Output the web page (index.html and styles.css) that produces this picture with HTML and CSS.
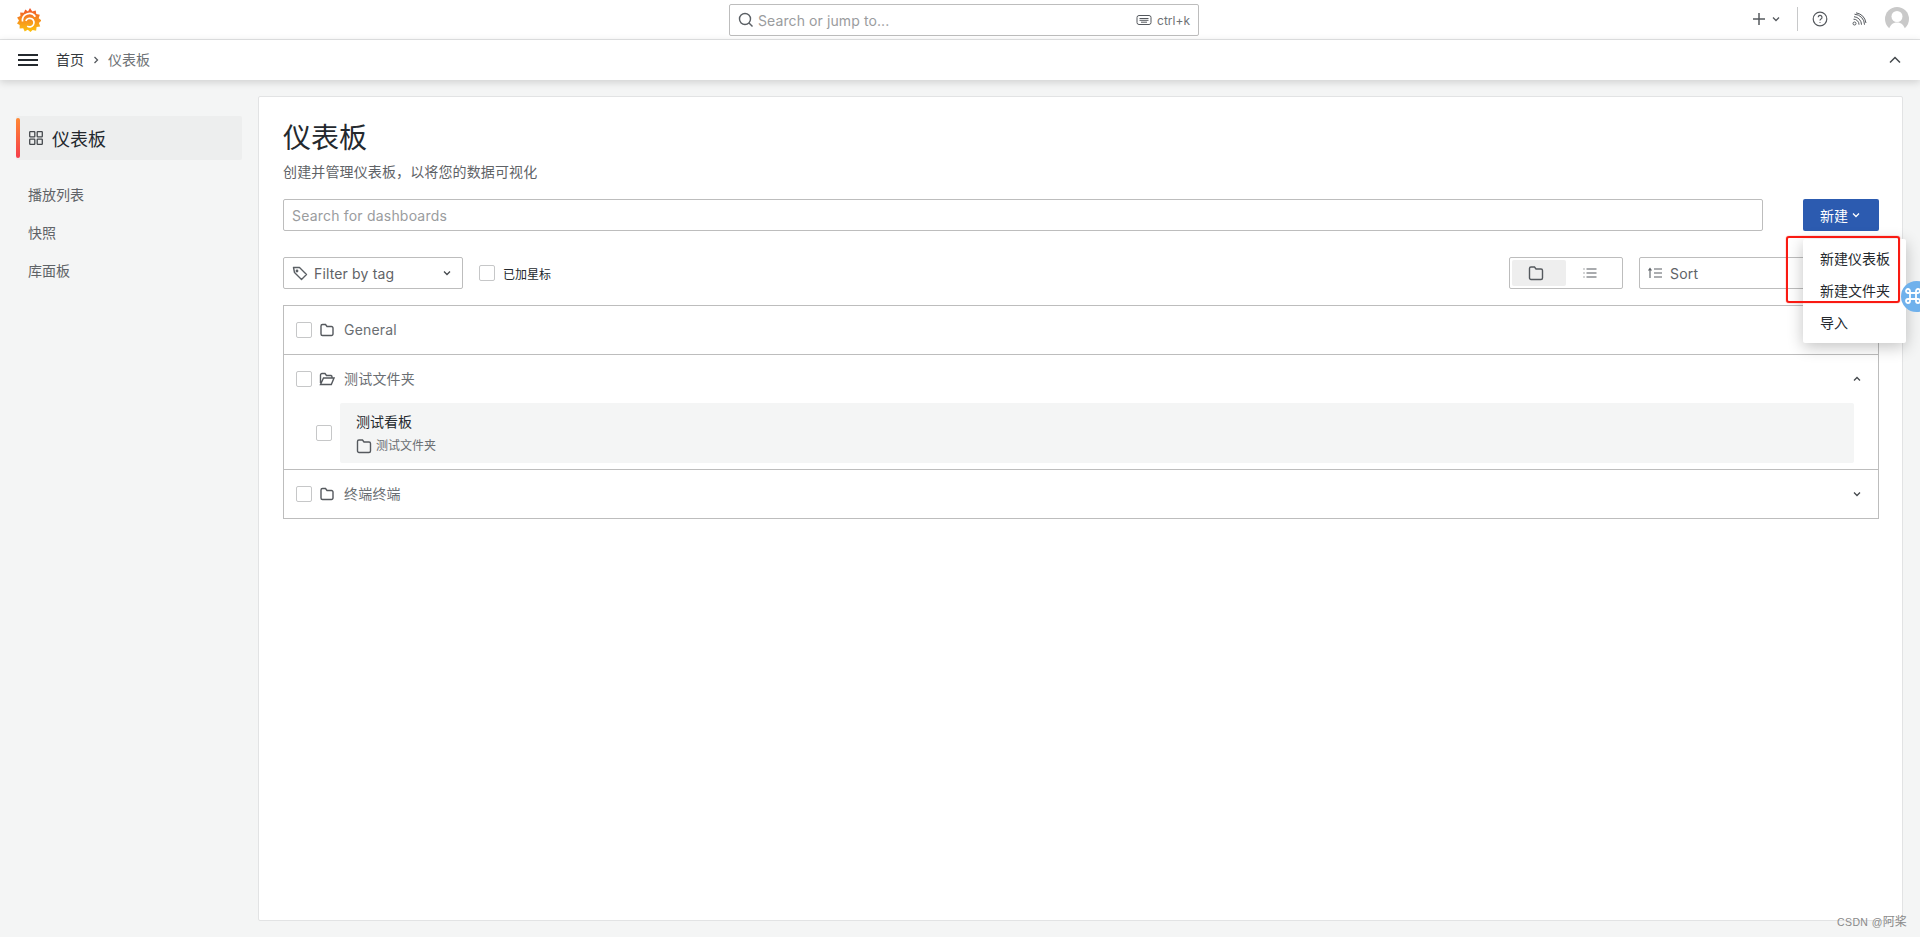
FILE: index.html
```html
<!DOCTYPE html>
<html lang="zh">
<head>
<meta charset="utf-8">
<title>仪表板</title>
<link rel="stylesheet" href="styles.css">
</head>
<body>
<header class="topbar">
  <svg class="logo" viewBox="0 0 24 24"><defs><linearGradient id="lg" x1="0" y1="1" x2="0" y2="0"><stop offset="0" stop-color="#fcc30f"/><stop offset=".55" stop-color="#f68a1f"/><stop offset="1" stop-color="#f0502a"/></linearGradient></defs><path class="logo-shape" fill="url(#lg)" d="M13 0l2.300 3.400 3.400-1 .6 3.600 3.500.8-1.100 3.400 2.800 2.300-2.600 2.500 1.300 3.400-3.600.7-.5 3.600-3.500-.8L13.500 24l-2.800-2.300-3 1.900-1.500-3.300-3.600.2.100-3.600L0 15.500l2-3L.1 9.400l3.300-1.300L3.200 4.500l3.600.2L8.300 1.400 11 3.600z"/><path class="logo-swirl" d="M5.500 13.500a7 7 0 0 1 12.800-4.800"/><path class="logo-swirl" d="M8.800 12.800a4.300 4.300 0 1 1 1.400 5.300"/></svg>
  <div class="global-search">
    <svg class="ic16 grey" viewBox="0 0 16 16"><circle cx="7" cy="7" r="5.500"/><path d="M11 11l3.500 3.500"/></svg>
    <span class="gs-text">Search or jump to...</span>
    <svg class="kbd" viewBox="0 0 16 12"><rect x="1" y="1.500" width="14" height="9" rx="2"/><path d="M3.500 4.500h9M3.500 6.300h9M5 8.200h6"/></svg>
    <span class="gs-hint">ctrl+k</span>
  </div>
  <div class="top-actions">
    <svg class="plus" viewBox="0 0 14 14"><path d="M7 1v12M1 7h12"/></svg>
    <svg class="chev small" viewBox="0 0 10 10"><path d="M2 3.500l3 3 3-3"/></svg>
    <span class="vsep"></span>
    <svg class="help" viewBox="0 0 16 16"><circle cx="8" cy="8" r="6.800"/><path d="M6.200 6.300a1.900 1.900 0 1 1 2.800 1.700c-.7.400-1 .7-1 1.500"/><circle class="dot" cx="8" cy="11.500" r=".6"/></svg>
    <svg class="rss" viewBox="0 0 16 16"><circle cx="3.500" cy="12.500" r="1.500"/><path d="M2.500 8.200a5.300 5.300 0 0 1 5.500 5.500M3 5.700A8 8 0 0 1 10.500 13.700M3.500 3.200A10.500 10.500 0 0 1 13.500 13.700M5 1.800A12.500 12.500 0 0 1 15 12"/></svg>
    <svg class="avatar" viewBox="0 0 24 24"><circle class="av-bg" cx="12" cy="12" r="12"/><circle class="av-fg" cx="12" cy="9.500" r="5.500"/><path class="av-fg" d="M3.500 24c1-6 4.500-8.500 8.500-8.500s7.500 2.500 8.500 8.500z"/></svg>
  </div>
</header>
<nav class="crumbbar">
  <svg class="burger" viewBox="0 0 20 12"><path d="M0 1h20M0 6h20M0 11h20"/></svg>
  <span class="crumb-home">首页</span>
  <svg class="chev crumb-sep" viewBox="0 0 10 10"><path d="M3.500 2l3 3-3 3"/></svg>
  <span class="crumb-cur">仪表板</span>
  <svg class="chev collapse" viewBox="0 0 14 14"><path d="M2 9.500l5-5 5 5"/></svg>
</nav>
<main class="page">
  <aside class="side">
    <div class="side-active">
      <svg class="grid-ic" viewBox="0 0 14 14"><rect x=".7" y=".7" width="5.100" height="5.100" rx=".6"/><rect x="8.200" y=".7" width="5.100" height="5.100" rx=".6"/><rect x=".7" y="8.200" width="5.100" height="5.100" rx=".6"/><rect x="8.200" y="8.200" width="5.100" height="5.100" rx=".6"/></svg>
      <span>仪表板</span>
    </div>
    <a class="side-link">播放列表</a>
    <a class="side-link">快照</a>
    <a class="side-link">库面板</a>
  </aside>
  <section class="panel">
    <h1>仪表板</h1>
    <p class="sub">创建并管理仪表板，以将您的数据可视化</p>
    <div class="search-row">
      <div class="input search">Search for dashboards</div>
      <div class="new-wrap">
        <button class="btn-new">新建<svg class="chev white" viewBox="0 0 10 10"><path d="M2 3.500l3 3 3-3"/></svg></button>
        <div class="menu">
          <div class="menu-item">新建仪表板</div>
          <div class="menu-item">新建文件夹</div>
          <div class="menu-item">导入</div>
        </div>
        <div class="redbox"></div>
      </div>
    </div>
    <div class="filter-row">
      <div class="input filter">
        <svg class="ic16 grey" viewBox="0 0 16 16"><path d="M1.500 2.500h6l7 7-5 5-7-7z" stroke-linejoin="round"/><circle cx="5" cy="6" r=".7"/></svg>
        <span class="f-text">Filter by tag</span>
        <svg class="chev f-chev" viewBox="0 0 10 10"><path d="M2 3.500l3 3 3-3"/></svg>
      </div>
      <span class="check"></span>
      <span class="starred">已加星标</span>
      <div class="toggle">
        <span class="tg tg-on"><svg class="ic16 dark" viewBox="0 0 16 16"><path d="M1.500 3.500A1.500 1.500 0 0 1 3 2h3.500L8 4h5a1.500 1.500 0 0 1 1.500 1.500V13a1.500 1.500 0 0 1-1.500 1.500H3A1.500 1.500 0 0 1 1.500 13z"/></svg></span>
        <span class="tg"><svg class="ic16 dark thin" viewBox="0 0 16 16"><path d="M4.500 4h10M4.500 8h10M4.500 12h10M1.500 4h1M1.500 8h1M1.500 12h1"/></svg></span>
      </div>
      <div class="input sort">
        <svg class="ic16 grey thin" viewBox="0 0 16 16"><path d="M3 13V4M1.500 5.500L3 3.500l1.500 2M7 4h8M7 8h8M7 12h8"/></svg>
        <span>Sort</span>
      </div>
    </div>
    <div class="list">
      <div class="row">
        <span class="check"></span>
        <svg class="ic16 dark folder" viewBox="0 0 16 16"><path d="M2 4a1.500 1.500 0 0 1 1.500-1.500h3L8 4.500h4.500A1.500 1.500 0 0 1 14 6v6a1.500 1.500 0 0 1-1.500 1.500h-9A1.500 1.500 0 0 1 2 12z"/></svg>
        <span class="row-name">General</span>
      </div>
      <div class="group">
        <div class="row">
          <span class="check"></span>
          <svg class="ic16 dark folder" viewBox="0 0 16 16"><path d="M1.500 12V4A1.500 1.500 0 0 1 3 2.500h3l1.500 2H12A1.500 1.500 0 0 1 13 6v1M1.500 13.500h10.800l2.700-6.500H4.500z"/></svg>
          <span class="row-name">测试文件夹</span>
          <svg class="chev r-chev" viewBox="0 0 10 10"><path d="M2 6.500l3-3 3 3"/></svg>
        </div>
        <div class="dash-row">
          <span class="check"></span>
          <div class="dash-card">
            <div class="dash-title">测试看板</div>
            <div class="dash-meta">
              <svg class="ic16 dark" viewBox="0 0 16 16"><path d="M1.500 3.500A1.500 1.500 0 0 1 3 2h3.500L8 4h5a1.500 1.500 0 0 1 1.500 1.500V13a1.500 1.500 0 0 1-1.500 1.500H3A1.500 1.500 0 0 1 1.500 13z"/></svg>
              <span>测试文件夹</span>
            </div>
          </div>
        </div>
      </div>
      <div class="row">
        <span class="check"></span>
        <svg class="ic16 dark folder" viewBox="0 0 16 16"><path d="M2 4a1.500 1.500 0 0 1 1.500-1.500h3L8 4.500h4.500A1.500 1.500 0 0 1 14 6v6a1.500 1.500 0 0 1-1.500 1.500h-9A1.500 1.500 0 0 1 2 12z"/></svg>
        <span class="row-name">终端终端</span>
        <svg class="chev r-chev" viewBox="0 0 10 10"><path d="M2 3.500l3 3 3-3"/></svg>
      </div>
    </div>
  </section>
</main>
<div class="floater"><svg class="cmd" viewBox="0 0 18 18"><path d="M6 6h6v6H6zM6 6H4a2 2 0 1 1 2-2zM12 6V4a2 2 0 1 1 2 2zM12 12h2a2 2 0 1 1-2 2zM6 12v2a2 2 0 1 1-2-2z"/></svg></div>
<div class="watermark"><span class="wm-latin">CSDN @</span>阿桨</div>
</body>
</html>
```
FILE: styles.css
```css
* { box-sizing: border-box; }
html, body { margin: 0; height: 937px; overflow: hidden; }
body {
  background: #f4f5f5;
  color: #24292e;
  font-family: Inter, "Noto Sans CJK SC", sans-serif;
  font-size: 14px;
  position: relative;
}
svg { fill: none; stroke: currentColor; flex: none; display: block; }
.dot { fill: currentColor; stroke: none; }

.topbar {
  height: 40px;
  background: #fff;
  border-bottom: 1px solid #e4e5e6;
  display: flex;
  align-items: center;
  padding: 0 11px 1px 17px;
  position: relative;
}
.logo { width: 24px; height: 24px; stroke: none; margin-top: 1px; }
.logo-shape { stroke: none; }
.logo-swirl { stroke: #fff; stroke-width: 1.700; fill: none; }
.global-search {
  position: absolute;
  left: 729px;
  top: 4px;
  width: 470px;
  height: 32px;
  border: 1px solid #bdbdbd;
  border-radius: 2px;
  display: flex;
  align-items: center;
  padding: 0 8px;
}
.ic16 { width: 16px; height: 16px; stroke-width: 1.400; }
.grey { color: #5a5f64; }
.dark { color: #55595e; }
.ic16.thin { stroke-width: 1.100; }
.gs-text { color: #9a9c9e; margin-left: 4px; font-size: 14px; letter-spacing: .1px; flex: 1; }
.kbd { width: 16px; height: 12px; color: #55595e; stroke-width: 1; margin-right: 5px; }
.gs-hint { color: #6e7276; font-size: 12px; }

.top-actions { margin-left: auto; display: flex; align-items: center; color: #55595e; }
.plus { width: 14px; height: 14px; stroke-width: 1.500; }
.chev { width: 10px; height: 10px; stroke-width: 1.300; }
.small { margin-left: 5px; }
.vsep { width: 1px; height: 24px; background: #c8c9ca; margin: 0 14px 0 16px; }
.help { width: 16px; height: 16px; stroke-width: 1.200; }
.rss { width: 16px; height: 16px; stroke-width: 1; margin-left: 23px; }
.avatar { width: 24px; height: 24px; margin-left: 18px; stroke: none; }
.av-bg { fill: #c9c9c9; }
.av-fg { fill: #fff; }

.crumbbar {
  height: 40px;
  background: #fff;
  box-shadow: 0 2px 8px rgba(0, 0, 0, .16);
  display: flex;
  align-items: center;
  padding: 0 16px 0 18px;
  position: relative;
}
.burger { width: 20px; height: 12px; stroke: #24292e; stroke-width: 2; }
.crumb-home { margin-left: 18px; padding-bottom: 2px; font-size: 14px; color: #35393d; }
.crumb-sep { margin: 0 5px 0 7px; width: 10px; color: #55595e; }
.crumb-cur { font-size: 14px; padding-bottom: 2px; color: #6e7276; margin-left: 2px; }
.collapse { margin-left: auto; width: 14px; height: 14px; color: #45494d; stroke-width: 1.500; margin-right: 2px; }

.page { display: flex; padding: 16px 16px 0 16px; height: 857px; }
.side { width: 226px; margin-right: 16px; padding-top: 20px; flex: none; }
.side-active {
  height: 44px;
  background: #edeeee;
  border-radius: 2px;
  display: flex;
  align-items: center;
  font-size: 18px;
  position: relative;
  padding-left: 13px;
  color: #24292e;
}
.side-active::before {
  content: "";
  position: absolute;
  left: 0;
  top: 2px;
  bottom: 2px;
  width: 4px;
  border-radius: 2px;
  background: linear-gradient(180deg, #ff8833, #f53e4c);
}
.grid-ic { width: 14px; height: 14px; margin-right: 9px; color: #45494d; stroke-width: 1.300; }
.side-link { display: block; height: 38px; line-height: 38px; padding-left: 12px; color: #5f6367; font-size: 14px; }
.side-active + .side-link { margin-top: 16px; }

.panel {
  flex: none;
  width: 1645px;
  height: 825px;
  background: #fff;
  border: 1px solid #e2e3e4;
  border-radius: 2px;
  padding: 21px 23px 0 24px;
}
h1 { margin: 0; font-size: 28px; font-weight: 400; line-height: 40px; color: #24292e; }
.sub { margin: 3px 0 16px 0; font-size: 14px; line-height: 22px; letter-spacing: .13px; color: #5f6367; }
.search-row { display: flex; gap: 40px; }
.input {
  height: 32px;
  border: 1px solid #bdbdbd;
  border-radius: 2px;
  display: flex;
  align-items: center;
  padding: 0 8px;
}
.search { width: 1480px; color: #9a9c9e; letter-spacing: .2px; }
.new-wrap { position: relative; width: 76px; }
.btn-new {
  width: 76px;
  height: 32px;
  border: 0;
  border-radius: 2px;
  background: #2c5bb0;
  padding: 0 0 0 17px;
  color: #fff;
  font: inherit;
  font-size: 14px;
  display: flex;
  align-items: center;
  gap: 3px;
}
.white { color: #fff; }
.menu {
  position: absolute;
  left: 0;
  top: 40px;
  width: 103px;
  height: 104px;
  background: #fff;
  border-radius: 2px;
  box-shadow: 0 4px 16px rgba(0, 0, 0, .24);
  padding: 4px 0;
  z-index: 3;
}
.menu-item { height: 32px; line-height: 32px; padding-left: 17px; color: #24292e; font-size: 14px; }
.redbox {
  position: absolute;
  left: -17px;
  top: 37px;
  width: 114px;
  height: 67px;
  border: 2px solid #f91a12;
  box-shadow: 0 0 1px #f91a12;
  border-radius: 3px;
  z-index: 4;
}

.filter-row { display: flex; align-items: center; margin-top: 26px; }
.filter { width: 180px; color: #5f6367; }
.f-text { margin-left: 6px; flex: 1; letter-spacing: .15px; }
.f-chev { margin-right: 2px; color: #45494d; }
.check {
  width: 16px;
  height: 16px;
  background: #fff;
  border: 1px solid #c6c7c8;
  border-radius: 2px;
  flex: none;
}
.filter + .check { margin-left: 16px; }
.starred { margin-left: 8px; font-size: 12px; color: #24292e; }
.toggle {
  margin-left: auto;
  width: 114px;
  height: 32px;
  border: 1px solid #bdbdbd;
  border-radius: 2px;
  padding: 2px;
  display: flex;
}
.tg { width: 54px; height: 26px; padding-right: 6px; display: flex; align-items: center; justify-content: center; border-radius: 2px; }
.tg-on { background: #eeeeee; }
.input.sort { width: 240px; margin-left: 16px; padding-left: 7px; color: #5f6367; gap: 7px; letter-spacing: .2px; }

.list { margin-top: 16px; border: 1px solid #bdbdbd; width: 1596px; }
.row { height: 48px; display: flex; align-items: center; padding-left: 12px; }
.group { border-top: 1px solid #bdbdbd; border-bottom: 1px solid #bdbdbd; height: 116px; }
.folder { margin-left: 7px; }
.row-name { margin-left: 9px; padding-bottom: 2px; color: #6a6e72; font-size: 14px; letter-spacing: .2px; }
.r-chev { margin-left: auto; margin-right: 16px; color: #45494d; }
.dash-row { display: flex; align-items: center; padding-left: 32px; padding-right: 24px; }
.dash-card {
  margin-left: 8px;
  flex: 1;
  height: 60px;
  background: #f4f5f5;
  border-radius: 2px;
  padding: 9px 16px;
}
.dash-title { font-size: 14px; line-height: 20px; color: #24292e; }
.dash-meta { display: flex; align-items: center; gap: 4px; font-size: 12px; line-height: 16px; color: #6a6e72; margin-top: 6px; }

.floater {
  position: absolute;
  left: 1901px;
  top: 281px;
  width: 31px;
  height: 31px;
  border-radius: 50%;
  background: #6fb1ec;
  padding: 6px 0 0 3px;
  z-index: 5;
}
.cmd { width: 18px; height: 18px; color: #fff; stroke-width: 1.800; }
.watermark {
  position: absolute;
  left: 1837px;
  top: 914px;
  font-size: 12px;
  line-height: 16px;
  color: #8a8a8a;
  white-space: nowrap;
}
.wm-latin { font-family: "Liberation Sans", sans-serif; font-size: 10.500px; letter-spacing: .4px; }
```
